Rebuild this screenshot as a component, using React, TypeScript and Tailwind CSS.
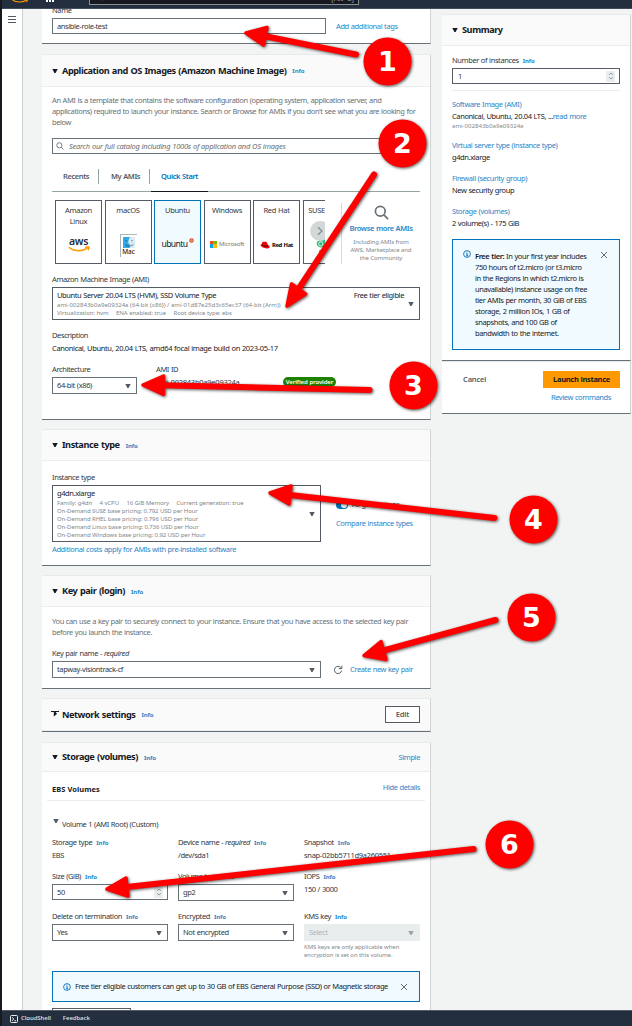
import type { ReactNode } from "react";

type BoxProps = { className?: string; children?: ReactNode };

/** One line of body text, 11px tall. */
function Line({ className = "", children }: BoxProps) {
  return <div className={`h-[11px] whitespace-nowrap leading-[11px] ${className}`}>{children}</div>;
}

function Small({ className = "tracking-[-0.1px]", children }: BoxProps) {
  return (
    <div className={`h-2 whitespace-pre text-[6px] leading-[8px] text-[#7f878c] [word-spacing:0px] ${className}`}>
      {children}
    </div>
  );
}

function Info({ className = "ml-[5px]" }: { className?: string }) {
  return <span className={`text-[6px] font-bold tracking-[-0.05px] text-[#2a86c7] ${className}`}>Info</span>;
}

function Caret({ className = "text-[#545b64]" }: { className?: string }) {
  return (
    <svg viewBox="0 0 6 4" className={`h-1 w-1.5 shrink-0 ${className}`}>
      <path d="M0.3 0H5.7L3.6 4H2.4Z" fill="currentColor" />
    </svg>
  );
}

function Close({ className = "" }: { className?: string }) {
  return (
    <svg viewBox="0 0 8 8" className={`h-2 w-2 shrink-0 ${className}`}>
      <path d="M1 1L7 7M7 1L1 7" stroke="#545b64" strokeWidth="0.9" fill="none" />
    </svg>
  );
}

function InfoIcon({ className = "" }: { className?: string }) {
  return (
    <svg viewBox="0 0 8 8" className={`h-2 w-2 shrink-0 ${className}`} fill="none" stroke="#0073bb" strokeWidth="0.9">
      <circle cx="4" cy="4" r="3.4" />
      <path d="M3.2 3.6H4.2V5.8M3 5.8H5.3M3.6 2.1H4.5" />
    </svg>
  );
}

function Magnifier({ className = "" }: { className?: string }) {
  return (
    <svg viewBox="0 0 16 16" className={`shrink-0 ${className}`} fill="none" stroke="#687078" strokeWidth="1.8">
      <circle cx="6.7" cy="6.7" r="5.2" />
      <path d="M10.6 10.6L15 15" />
    </svg>
  );
}

function Select({ className = "w-full", children }: BoxProps) {
  return (
    <div className={`flex h-[17px] items-center justify-between border border-[#687078] bg-white pl-1 pr-[5px] leading-[15px] ${className}`}>
      <span>{children}</span>
      <Caret />
    </div>
  );
}

function Spinner() {
  return (
    <div className="flex h-[11px] w-[9px] items-center justify-center bg-[#eaeded]">
      <svg viewBox="0 0 6 8" className="h-2 w-1.5" fill="none" stroke="#879196" strokeWidth="0.9">
        <path d="M1 2.8L3 1L5 2.8M1 5.2L3 7L5 5.2" />
      </svg>
    </div>
  );
}

function Card({ className = "", children }: BoxProps) {
  return (
    <section className={`flex shrink-0 flex-col border-b border-r border-t border-b-[#687078] border-r-[#d0d5d6] border-t-[#e6eaea] bg-white ${className}`}>
      {children}
    </section>
  );
}

function CardHeader({ className = "h-8", title, right, info = true, icon }: { className?: string; title: string; right?: ReactNode; info?: boolean; icon?: ReactNode }) {
  return (
    <header className={`flex shrink-0 items-center border-b border-[#eaeded] bg-[#fafafa] pl-[10px] pr-[10px] ${className}`}>
      <span className="flex w-[10px] items-center">{icon ?? <Caret className="text-[#16191f]" />}</span>
      <h2 className="whitespace-nowrap text-[9.2px] font-bold leading-[12px] tracking-[-0.45px] text-[#16191f] [word-spacing:0.7px]">{title}</h2>
      {info && <Info className="ml-[6px] mt-[2px]" />}
      <div className="ml-auto">{right}</div>
    </header>
  );
}

function Tile({ label, className = "border-[#545b64]", children }: { label: ReactNode; className?: string; children: ReactNode }) {
  return (
    <div className={`flex h-16 w-[47px] shrink-0 flex-col items-center border pt-1 text-center leading-[11px] tracking-[-0.3px] ${className}`}>
      <div className="h-[22px]">{label}</div>
      <div className="flex h-[34px] items-center justify-center">{children}</div>
    </div>
  );
}

function AwsLogo() {
  return (
    <div className="flex flex-col items-center">
      <span className="h-[9px] text-[10.5px] font-semibold leading-[9px] tracking-[-0.3px] text-[#232f3e]">aws</span>
      <svg viewBox="0 0 22 6" className="h-1.5 w-[22px]" fill="none" stroke="#ff9900" strokeWidth="1.4">
        <path d="M0.8 1.3C6 5.8 14 5.8 19.5 2.2M17.2 1.2L21 1L20.2 4.3" />
      </svg>
    </div>
  );
}

function MacLogo() {
  return (
    <div className="flex h-[23px] w-[17px] flex-col items-center border-l border-t border-[#aab7b8] pt-[2px]">
      <svg viewBox="0 0 12 11" className="h-[11px] w-3">
        <rect width="12" height="11" fill="#31a9ea" />
        <path d="M7 0H12V11H6.8C6.6 9 6.6 7.5 6.7 6.4H5.2C5.3 4 6 1.5 7 0Z" fill="#dcecf5" />
        <path d="M2 7.4C4.5 9.6 8 9.6 10.4 7.4M3.3 3V4.4M9 3V4.4" stroke="#17435f" strokeWidth="0.7" fill="none" />
      </svg>
      <span className="text-[6.5px] leading-[8px] tracking-[-0.1px] text-black">Mac</span>
    </div>
  );
}

function UbuntuLogo() {
  return (
    <div className="flex items-start gap-px">
      <span className="text-[8.6px] leading-[12px] tracking-[-0.6px] text-[#222]">ubuntu</span>
      <svg viewBox="0 0 5 5" className="h-[5px] w-[5px]">
        <circle cx="2.5" cy="2.5" r="2.2" fill="#dd4814" />
        <circle cx="2.5" cy="2.5" r="0.9" fill="none" stroke="#fff" strokeWidth="0.5" />
      </svg>
    </div>
  );
}

function MicrosoftLogo() {
  return (
    <div className="flex items-center gap-[2px]">
      <div className="grid h-[7px] w-[7px] grid-cols-2 grid-rows-2">
        <i className="bg-[#f25022]" />
        <i className="bg-[#7fba00]" />
        <i className="bg-[#00a4ef]" />
        <i className="bg-[#ffb900]" />
      </div>
      <span className="text-[6px] leading-[8px] tracking-[-0.15px] text-[#737373]">Microsoft</span>
    </div>
  );
}

function RedHatLogo() {
  return (
    <div className="flex items-center gap-[2px] pt-[2px]">
      <svg viewBox="0 0 10 8" className="h-2 w-2.5">
        <path d="M2.3 1.2C3.2 0.2 4 0.9 5 0.7C6.5 0.4 7.3 1.6 7.8 3.8C9.4 4.6 10 5.6 9.5 6.5C8.6 8.2 3.4 7.3 1.2 5.2C0 4.2 0.3 3.3 1.8 3.2Z" fill="#e00" />
        <path d="M2 3.6C3.4 5.2 6 5.7 7.8 5" stroke="#111" strokeWidth="0.8" fill="none" />
      </svg>
      <span className="text-[5.8px] font-bold leading-[8px] tracking-[-0.3px] text-black">Red Hat</span>
    </div>
  );
}

function SuseLogo() {
  return (
    <div className="flex flex-col pt-[6px]">
      <svg viewBox="0 0 10 10" className="h-2.5 w-2.5">
        <path d="M9 0V6C9 8.5 7 9.5 5 9.5C2.5 9.5 0.7 7.8 0.7 5.6C0.7 3 3 2.2 5 2.2C7 2.2 8.6 1.4 9 0Z" fill="#30ba78" />
        <circle cx="4.8" cy="5.8" r="2.2" fill="none" stroke="#fff" strokeWidth="0.8" />
      </svg>
      <span className="text-[6px] font-semibold leading-[8px] text-black">S</span>
    </div>
  );
}

function NameCard() {
  return (
    <section className="h-[35px] shrink-0 border-b border-r border-b-[#687078] border-r-[#d0d5d6] bg-white pl-[10px]">
      <Line className="-mt-1">Name</Line>
      <div className="mt-[2px] flex items-center">
        <div className="flex h-4 w-[274px] items-center border border-[#687078] pl-1">ansible-role-test</div>
        <span className="ml-[10px] text-[#2a86c7]">Add additional tags</span>
      </div>
    </section>
  );
}

function ImagesCard() {
  return (
    <Card className="mt-[10px] h-[366px]">
      <CardHeader title="Application and OS Images (Amazon Machine Image)" />
      <div className="pl-[10px] pr-[10px] pt-[8px]">
        <div className="text-[#687078]">
          <Line>An AMI is a template that contains the software configuration (operating system, application server, and</Line>
          <Line>applications) required to launch your instance. Search or Browse for AMIs if you don't see what you are looking for</Line>
          <Line>below</Line>
        </div>
        <div className="mt-[10px] flex h-4 items-center gap-[5px] border border-[#687078] pl-[3px] italic tracking-[-0.25px] text-[#687078]">
          <Magnifier className="h-2 w-2" />
          Search our full catalog including 1000s of application and OS images
        </div>
        <nav className="mt-[15px] flex h-[23px] border-b border-[#95a5a6] font-semibold text-[#545b64]">
          <div className="h-[15px] w-[47px] border-r border-[#95a5a6] pl-[11px] leading-[15px]">Recents</div>
          <div className="h-[15px] w-[51px] whitespace-nowrap border-r border-[#95a5a6] pl-[12px] leading-[15px]">My AMIs</div>
          <div className="ml-[1px] h-[23px] w-[57px] whitespace-nowrap border-b border-[#16191f] text-center leading-[15px] text-[#0073bb]">Quick Start</div>
        </nav>
        <div className="mt-[8px] flex">
          <div className="relative flex w-[273px] gap-[2.5px] overflow-hidden pl-[3px]">
            <Tile label={<>Amazon<br />Linux</>}><AwsLogo /></Tile>
            <Tile label="macOS"><div className="pt-[3px]"><MacLogo /></div></Tile>
            <Tile label="Ubuntu" className="border-[#0073bb] bg-[#f1faff]"><UbuntuLogo /></Tile>
            <Tile label="Windows"><MicrosoftLogo /></Tile>
            <Tile label="Red Hat"><RedHatLogo /></Tile>
            <Tile label={<span className="mr-[19px]">SUSE</span>}><div className="mr-[11px]"><SuseLogo /></div></Tile>
            <div className="absolute left-[257.5px] top-[21px] flex h-5 w-5 items-center justify-center rounded-full bg-[#cdd4d3]/90">
              <svg viewBox="0 0 8 10" className="h-2.5 w-2" fill="none" stroke="#7f8c8d" strokeWidth="1.2">
                <path d="M2 1.2L6 5L2 8.8" />
              </svg>
            </div>
          </div>
          <div className="ml-[16px] mt-[3px] flex h-[61px] w-[79px] flex-col items-center border-l border-[#d5dbdb] text-center">
            <Magnifier className="mt-[2px] h-[15px] w-[15px]" />
            <Line className="mt-[3px] font-semibold text-[#2a86c7]">Browse more AMIs</Line>
            <Small className="mt-[4px] tracking-[-0.1px]">Including AMIs from</Small>
            <Small>AWS, Marketplace and</Small>
            <Small>the Community</Small>
          </div>
        </div>
        <Line className="mt-[10px]">Amazon Machine Image (AMI)</Line>
        <div className="mt-[2px] flex h-[33px] items-center justify-between border border-[#545b64] pl-1 pr-[5px]">
          <div>
            <Line className="text-[#16191f]">Ubuntu Server 20.04 LTS (HVM), SSD Volume Type</Line>
            <Small className="tracking-[0.03px]">ami-002843b0a9e09324a (64-bit (x86)) / ami-01d87e25d3c65ec37 (64-bit (Arm))</Small>
            <Small className="tracking-[-0.06px]">{"Virtualization: hvm     ENA enabled: true     Root device type: ebs"}</Small>
          </div>
          <div className="flex items-center gap-1">
            <Line className="-mt-4 text-[#16191f]">Free tier eligible</Line>
            <Caret />
          </div>
        </div>
        <Line className="mt-[10px]">Description</Line>
        <Line className="mt-[2px] tracking-[-0.34px] text-[#16191f]">Canonical, Ubuntu, 20.04 LTS, amd64 focal image build on 2023-05-17</Line>
        <div className="mt-[10px] flex">
          <div className="w-[104px]">
            <Line>Architecture</Line>
            <Select className="mt-[2px] w-[85px]">64-bit (x86)</Select>
          </div>
          <div>
            <Line>AMI ID</Line>
            <div className="mt-[2px] flex">
              <Line className="w-[127px] tracking-[-0.24px]">ami-002843b0a9e09324a</Line>
              <div className="h-[10px] w-[53px] rounded-full bg-[#1d8102] text-center text-[6px] font-semibold leading-[10px] tracking-[-0.1px] text-white">Verified provider</div>
            </div>
          </div>
        </div>
      </div>
    </Card>
  );
}

function InstanceCard() {
  return (
    <Card className="mt-[9px] h-[137px]">
      <CardHeader title="Instance type" className="h-[31px]" />
      <div className="pl-[10px] pt-[11px]">
        <Line>Instance type</Line>
        <div className="mt-[2px] flex">
          <div className="flex h-[57px] w-[269px] items-center justify-between border border-[#545b64] pl-1 pr-[5px]">
            <div>
              <Line className="text-[#16191f]">g4dn.xlarge</Line>
              <Small className="tracking-[-0.07px]">{"Family: g4dn     4 vCPU     16 GiB Memory     Current generation: true"}</Small>
              <Small>On-Demand SUSE base pricing: 0.792 USD per Hour</Small>
              <Small>On-Demand RHEL base pricing: 0.796 USD per Hour</Small>
              <Small>On-Demand Linux base pricing: 0.736 USD per Hour</Small>
              <Small>On-Demand Windows base pricing: 0.92 USD per Hour</Small>
            </div>
            <Caret />
          </div>
          <div className="ml-[15px] pt-[14px]">
            <div className="flex items-center gap-[4px]">
              <div className="flex h-2 w-3 justify-end rounded-full bg-[#0073bb] p-px">
                <div className="h-1.5 w-1.5 rounded-full bg-white" />
              </div>
              <Line>All generations</Line>
            </div>
            <Line className="mt-[8px] text-[#2a86c7]">Compare instance types</Line>
          </div>
        </div>
        <Line className="mt-[2px] text-[#2a86c7]">Additional costs apply for AMIs with pre-installed software</Line>
      </div>
    </Card>
  );
}

function KeyPairCard() {
  return (
    <Card className="mt-[9px] h-[114px]">
      <CardHeader title="Key pair (login)" className="h-[31px]" />
      <div className="pl-[10px] pt-[9px]">
        <div className="text-[#687078]">
          <Line>You can use a key pair to securely connect to your instance. Ensure that you have access to the selected key pair</Line>
          <Line>before you launch the instance.</Line>
        </div>
        <Line className="mt-[10px]">Key pair name - <em>required</em></Line>
        <div className="mt-[2px] flex items-center">
          <Select className="w-[269px]">tapway-visiontrack-cf</Select>
          <svg viewBox="0 0 10 10" className="ml-[12px] h-[10px] w-[10px]" fill="none" stroke="#545b64" strokeWidth="1">
            <path d="M8.6 5.6A3.6 3.6 0 1 1 7.8 2.6M8.8 0.8V3.6H5.8" />
          </svg>
          <Line className="ml-[7px] text-[#2a86c7]">Create new key pair</Line>
        </div>
      </div>
    </Card>
  );
}

function NetworkCard() {
  return (
    <Card className="mt-[9px] h-[34px]">
      <CardHeader
        className="h-[32px]"
        title="Network settings"
        icon={
          <svg viewBox="0 0 8 6" className="-ml-px -mt-px h-1.5 w-2" fill="#16191f">
            <path d="M0 0H8V1H4.6L6 3L2.8 5.6V1H0Z" />
          </svg>
        }
        right={<div className="h-[17px] w-[35px] border border-[#545b64] bg-white text-center font-semibold leading-[15px] tracking-[-0.1px] text-[#545b64]">Edit</div>}
      />
    </Card>
  );
}

function Field({ label, children }: { label: ReactNode; children: ReactNode }) {
  return (
    <div className="w-[116px] shrink-0">
      <Line>{label} <Info className="ml-[2px]" /></Line>
      <div className="mt-[2px]">{children}</div>
    </div>
  );
}

function StorageCard() {
  return (
    <Card className="mt-[10px] h-[300px]">
      <CardHeader className="h-[29px]" title="Storage (volumes)" right={<span className="text-[#2a86c7]">Simple</span>} />
      <div className="pl-[10px] pr-[10px] pt-[10px]">
        <div className="flex justify-between">
          <Line className="mt-[2px] font-bold tracking-[0px] text-[#16191f]">EBS Volumes</Line>
          <Line className="text-[#2a86c7]">Hide details</Line>
        </div>
        <div className="-mx-[5px] mt-[5px] border-b border-[#eaeded]" />
        <div className="mt-[18px] flex">
          <Caret className="ml-[1px] text-[#545b64]" />
          <Line className="ml-[3px]">Volume 1 (AMI Root) (Custom)</Line>
        </div>
        <div className="mt-[7px] flex gap-[10px]">
          <Field label="Storage type"><Line>EBS</Line></Field>
          <Field label={<>Device name - <em>required</em></>}><Line>/dev/sda1</Line></Field>
          <Field label="Snapshot"><Line className="tracking-[-0.3px]">snap-02bb5711d9a260551</Line></Field>
        </div>
        <div className="mt-[10px] flex gap-[10px]">
          <Field label="Size (GiB)">
            <div className="flex h-4 items-center justify-between border border-[#687078] pl-1 pr-1">50<Spinner /></div>
          </Field>
          <Field label="Volume type"><Select>gp2</Select></Field>
          <Field label="IOPS"><Line>150 / 3000</Line></Field>
        </div>
        <div className="mt-[10px] flex gap-[10px]">
          <Field label="Delete on termination"><Select>Yes</Select></Field>
          <Field label="Encrypted"><Select>Not encrypted</Select></Field>
          <Field label="KMS key">
            <div className="flex h-[17px] items-center justify-between bg-[#eaeded] pl-[5px] pr-[6px] text-[#aab7b8]">
              Select<Caret className="text-[#95a5a6]" />
            </div>
            <Small className="mt-[2px] tracking-[-0.08px]">KMS keys are only applicable when</Small>
            <Small className="tracking-[-0.08px]">encryption is set on this volume.</Small>
          </Field>
        </div>
        <div className="mt-[12px] flex h-[31px] items-center border border-[#0073bb] bg-[#f1faff] pl-[10px] pr-[11px] text-[#16191f]">
          <InfoIcon />
          <span className="ml-1 whitespace-nowrap">Free tier eligible customers can get up to 30 GB of EBS General Purpose (SSD) or Magnetic storage</span>
          <Close className="ml-auto" />
        </div>
        <div className="mt-[6px] h-[17px] w-[79px] border border-[#545b64]" />
      </div>
    </Card>
  );
}

function SummaryItem({ title, children }: { title: string; children: ReactNode }) {
  return (
    <div className="mb-[10px]">
      <Line className="text-[#2a86c7]">{title}</Line>
      <div className="mt-[1px] text-[#16191f]">{children}</div>
    </div>
  );
}

function Summary() {
  return (
    <aside className="ml-[11px] w-[189px] shrink-0 pt-[5px]">
      <Card className="h-[347px]">
        <CardHeader title="Summary" info={false} className="h-[31px]" />
        <div className="px-[10px] pt-[9px]">
          <Line>Number of instances <Info className="ml-[2px]" /></Line>
          <div className="mt-[2px] flex h-4 items-center justify-between border border-[#545b64] pl-[5px] pr-1">1<Spinner /></div>
          <div className="mb-[8px] mt-[6px] border-b border-[#eaeded]" />
          <SummaryItem title="Software Image (AMI)">
            <Line>Canonical, Ubuntu, 20.04 LTS, ...<span className="text-[#2a86c7]">read more</span></Line>
            <Small className="tracking-[0.03px]">ami-002843b0a9e09324a</Small>
          </SummaryItem>
          <SummaryItem title="Virtual server type (instance type)"><Line>g4dn.xlarge</Line></SummaryItem>
          <SummaryItem title="Firewall (security group)"><Line>New security group</Line></SummaryItem>
          <SummaryItem title="Storage (volumes)"><Line>2 volume(s) - 175 GiB</Line></SummaryItem>
          <div className="flex h-[111px] border border-[#0073bb] bg-[#f1faff] pl-[10px] pr-[11px] pt-[11px] text-[#16191f]">
            <InfoIcon className="-mt-px" />
            <div className="ml-1">
              <Line><b className="font-semibold">Free tier:</b> In your first year includes</Line>
              <Line>750 hours of t2.micro (or t3.micro</Line>
              <Line>in the Regions in which t2.micro is</Line>
              <Line>unavailable) instance usage on free</Line>
              <Line>tier AMIs per month, 30 GiB of EBS</Line>
              <Line>storage, 2 million IOs, 1 GB of</Line>
              <Line>snapshots, and 100 GB of</Line>
              <Line>bandwidth to the internet.</Line>
            </div>
            <Close className="ml-auto" />
          </div>
        </div>
      </Card>
      <Card className="h-[53px] pl-[21px] pr-[10px] pt-[9px]">
        <div className="flex items-center justify-between">
          <span className="font-semibold tracking-[-0.15px] text-[#545b64]">Cancel</span>
          <div className="h-[17px] w-[77px] bg-[#ff9900] text-center font-bold leading-[17px] tracking-[-0.3px] text-[#16191f]">Launch instance</div>
        </div>
        <Line className="mt-[4px] pr-[9px] text-right text-[#2a86c7]">Review commands</Line>
      </Card>
    </aside>
  );
}

type Mark = { n: number; cx: number; cy: number; tail: [number, number]; tip: [number, number]; a: [number, number]; b: [number, number] };

const marks: Mark[] = [
  { n: 1, cx: 387.5, cy: 61.5, tail: [356, 54.5], tip: [246, 33], a: [267, 27.5], b: [263.5, 45] },
  { n: 2, cx: 402.5, cy: 143.5, tail: [374, 174.5], tip: [287, 306], a: [291.5, 284], b: [305.5, 294] },
  { n: 3, cx: 413.5, cy: 385.5, tail: [369.5, 390], tip: [143, 385], a: [163.5, 376], b: [163.5, 394.5] },
  { n: 4, cx: 533.5, cy: 519.5, tail: [494.5, 518], tip: [270, 493], a: [291, 486], b: [289, 504] },
  { n: 5, cx: 531.5, cy: 617.5, tail: [495.5, 620], tip: [364, 655.5], a: [381, 641.5], b: [386, 659.5] },
  { n: 6, cx: 509.5, cy: 844.5, tail: [473.5, 849], tip: [107, 889], a: [126, 878], b: [128, 896] },
];

function Annotations() {
  return (
    <svg viewBox="0 0 632 1026" className="pointer-events-none absolute -left-0.5 top-0 h-[1026px] w-[632px]">
      <g className="[filter:drop-shadow(1.5px_1.5px_1.5px_rgb(0_0_0/0.65))]">
        {marks.map((m) => (
          <g key={m.n} fill="#ff0000" stroke="#ff0000" strokeLinecap="round" strokeLinejoin="round">
            <line x1={m.tail[0]} y1={m.tail[1]} x2={(m.a[0] + m.b[0]) / 2} y2={(m.a[1] + m.b[1]) / 2} strokeWidth="6" />
            <polygon points={`${m.tip} ${m.a} ${m.b}`} strokeWidth="3.5" />
            <circle cx={m.cx} cy={m.cy} r="24" stroke="none" />
          </g>
        ))}
      </g>
      {marks.map((m) => (
        <text key={m.n} x={m.cx} y={m.cy + 9.5} textAnchor="middle" fill="#fff" className="font-['DejaVu_Sans'] text-[27px] font-bold tracking-normal">
          {m.n}
        </text>
      ))}
    </svg>
  );
}

export default function App() {
  return (
    <div className="relative flex h-[1026px] w-[632px] flex-col overflow-hidden border-l-2 border-[#16191f] bg-[#f2f3f3] font-['Noto_Sans',sans-serif] text-[7.5px] leading-[11px] tracking-[-0.39px] text-[#33383f] [word-spacing:0.35px]">
      <header className="flex h-[9px] shrink-0 items-start border-b border-[#414d5c] bg-[#232f3e]">
        <svg viewBox="0 0 16 3" className="ml-[10px] h-[3px] w-4" fill="none" stroke="#ff9900" strokeWidth="1.1">
          <path d="M0.5 0C4 2.6 10 2.6 14 0.4M12.6 0H15.3L14.6 2" />
        </svg>
        <div className="ml-[18px] flex gap-px">
          <i className="h-[2px] w-[2px] bg-white" />
          <i className="h-[2px] w-[2px] bg-white" />
          <i className="h-[2px] w-[2px] bg-white" />
        </div>
        <div className="ml-[35px] flex h-[5px] w-[270px] items-start justify-between overflow-hidden border border-t-0 border-[#879196] bg-[#16191f] pl-[6px] pr-[4px] text-[#95a5a6]">
          <Magnifier className="-mt-[6px] h-[7px] w-[7px]" />
          <span className="-mt-[7px] h-[11px] tracking-[0px]">[Alt+S]</span>
        </div>
      </header>
      <div className="flex h-[1001px] shrink-0 overflow-hidden">
        <nav className="w-[21px] shrink-0 border-r border-[#ccd1d1] bg-white pl-[6px] pt-[7px]">
          <div className="flex w-2 flex-col gap-[2px]">
            <i className="h-px bg-[#545b64]" />
            <i className="h-px bg-[#545b64]" />
            <i className="h-px bg-[#545b64]" />
          </div>
        </nav>
        <main className="ml-[19px] flex w-[389px] shrink-0 flex-col">
          <NameCard />
          <ImagesCard />
          <InstanceCard />
          <KeyPairCard />
          <NetworkCard />
          <StorageCard />
        </main>
        <Summary />
      </div>
      <footer className="flex h-4 shrink-0 items-center border-t border-[#545b64] bg-[#232f3e] pl-2 text-[6px] font-semibold tracking-[-0.1px] text-[#d5dbdb]">
        <svg viewBox="0 0 8 8" className="h-2 w-2" fill="none" stroke="#fff" strokeWidth="0.9">
          <rect x="0.5" y="0.5" width="7" height="7" rx="1" />
          <path d="M2 2.3L3.8 4L2 5.7M4.3 5.8H6" />
        </svg>
        <span className="ml-[3px]">CloudShell</span>
        <span className="ml-3">Feedback</span>
      </footer>
      <Annotations />
    </div>
  );
}
